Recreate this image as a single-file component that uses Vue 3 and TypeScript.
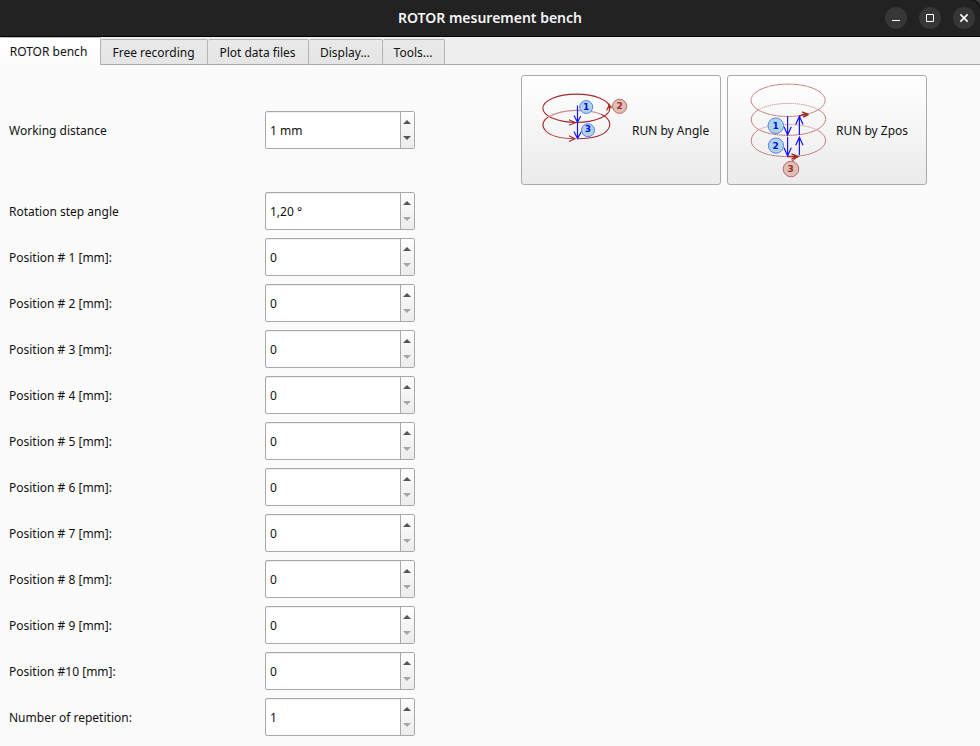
<script setup lang="ts">
import { ref } from 'vue'

interface Field {
  label: string
  value: string
  canDecrease: boolean
}

const tabs = [
  { name: 'ROTOR bench', cls: 'bench' },
  { name: 'Free recording', cls: 'free' },
  { name: 'Plot data files', cls: 'plot' },
  { name: 'Display...', cls: 'display' },
  { name: 'Tools...', cls: 'tools' },
]
const activeTab = ref(0)

const fields: Field[] = [
  { label: 'Rotation step angle', value: '1,20 °', canDecrease: false },
  ...Array.from({ length: 10 }, (_, i) => ({
    label: `Position #${i < 9 ? ' ' : ''}${i + 1} [mm]:`,
    value: '0',
    canDecrease: false,
  })),
  { label: 'Number of repetition:', value: '1', canDecrease: false },
]
const rows: Field[] = [{ label: 'Working distance', value: '1 mm', canDecrease: true }, ...fields]
</script>

<template>
  <div class="window">
    <div class="titlebar-frame">
      <header class="titlebar">
        <h1 class="title">ROTOR mesurement bench</h1>
        <div class="controls">
          <svg class="control" viewBox="0 0 22 22"><circle cx="11" cy="11" r="11" /><path d="M7 13.5h8" /></svg>
          <svg class="control" viewBox="0 0 22 22"><circle cx="11" cy="11" r="11" /><path d="M7.5 7.5h7v7h-7z" /></svg>
          <svg class="control" viewBox="0 0 22 22"><circle cx="11" cy="11" r="11" /><path class="cross" d="M7.4 7.4l7.2 7.2M14.6 7.4l-7.2 7.2" /></svg>
        </div>
      </header>
    </div>

    <nav class="tabs">
      <button
        v-for="(tab, i) in tabs"
        :key="tab.name"
        type="button"
        :class="['tab', tab.cls, { active: i === activeTab }]"
        @click="activeTab = i"
      >{{ tab.name }}</button>
    </nav>

    <main class="form">
      <div v-for="(row, i) in rows" :key="row.label" :class="['row', { first: i === 0 }]">
        <span class="label">{{ row.label }}</span>
        <div class="spin">
          <span class="value">{{ row.value }}</span>
          <span class="arrows">
            <svg class="arrow" viewBox="0 0 8 4"><path d="M0 4L4 0L8 4z" /></svg>
            <svg :class="['arrow', { disabled: !row.canDecrease }]" viewBox="0 0 8 4"><path d="M0 0L4 4L8 0z" /></svg>
          </span>
        </div>
        <div v-if="i === 0" class="actions">
          <button type="button" class="run">
            <svg class="picture" viewBox="528 80 100 100">
              <g class="red">
                <ellipse cx="576.4" cy="108.3" rx="33.5" ry="14.2" />
                <path d="M548 117.2C537 124 543 138.7 575 138.7M578 138.7C612 138.7 617 121 601 114.2" />
                <path class="faint" d="M548 117.2C558 111.5 567 110.4 576 110.4S594 111.3 601 114.2" />
                <path d="M569 119.8L575.5 122.7L569 125.2M569 135.8L575 138.7L569 141.5" />
                <path d="M606.6 110.5L609.3 104.5L611.5 108.3M609.3 104.5V110M611.5 106.5h2" />
              </g>
              <g class="blue">
                <path d="M577.5 105.5V122.5M574 115.5L577.5 122.3L580.7 116M577.5 122.5V138.5M574 131.5L577.5 138.4L581.5 131.5" />
              </g>
              <g class="blue-badge">
                <circle cx="586.2" cy="107" r="6.5" /><text x="586.2" y="109.8">1</text>
                <circle cx="588" cy="130.2" r="6.5" /><text x="588" y="132.3">3</text>
              </g>
              <g class="red-badge"><circle cx="619.6" cy="106.3" r="7.1" /><text x="619.6" y="109.4">2</text></g>
            </svg>
            <span class="caption">RUN by Angle</span>
          </button>
          <button type="button" class="run">
            <svg class="picture" viewBox="732 80 100 100">
              <g class="red thin">
                <ellipse class="pale" cx="788.1" cy="100.3" rx="37" ry="16.2" />
                <path class="pale" d="M758 110C743 119 753 135.3 788 135.3S835 118 818 109.5M758 130C743 141 753 156.6 788 156.6S835 140 818 130.5" />
                <path class="dots" d="M758 110C773 101.3 803 101.3 818 109.5M758 130C773 122.5 803 122.5 818 130.5" />
                <path class="heavy" d="M799.5 116.2L803 114.5H808.5L802 111.8M808.5 114.5L803 117M788 156.5H798M791.5 153.8L798 156.5L791.5 159" />
                <path d="M791.5 161.5L798 156.7" />
              </g>
              <g class="blue">
                <path d="M787.6 116.3V135M784 126.8L787.6 135L791.3 126.8M787.6 137V156M784 147.8L787.6 156L791.3 147.8M799.4 155V137.5M795.7 145.2L799.4 137.2L803 145.2M799.4 135V116.5M795.7 124.5L799.4 116.3L803 124.5" />
              </g>
              <g class="blue-badge">
                <circle cx="775.8" cy="125.7" r="7.8" /><text x="775.6" y="128.9">1</text>
                <circle cx="776" cy="145.6" r="7.6" /><text x="775.6" y="148.6">2</text>
              </g>
              <g class="red-badge"><circle cx="791" cy="169" r="7.8" /><text x="790.6" y="172">3</text></g>
            </svg>
            <span class="caption">RUN by Zpos</span>
          </button>
        </div>
      </div>
    </main>
  </div>
</template>

<style>
body {
  background: #fbfbfb;
  overflow: hidden;
}
</style>

<style scoped>
.window {
  height: 746px;
  box-sizing: border-box;
  overflow: hidden;
  background: #fbfbfb;
  color: #111;
  font: 12px/16px "Noto Sans", "Open Sans", sans-serif;
}
.titlebar-frame {
  background: #3a3a3a;
}
.titlebar {
  display: grid;
  grid-template-columns: 1fr auto 1fr;
  align-items: center;
  height: 36px;
  background: #222;
  border-bottom: 1px solid #000;
  border-top-right-radius: 11px;
  box-shadow: 1px -1px #111;
}
.title {
  grid-column: 2;
  margin: 0;
  color: #f5f5f5;
  font: 600 14px/18px "Noto Sans", sans-serif;
  letter-spacing: -0.01px;
}
.controls {
  display: flex;
  justify-content: flex-end;
  gap: 12px;
  padding-right: 5px;
}
.control {
  width: 22px;
  height: 22px;
  fill: #373737;
}
.control path {
  fill: none;
  stroke: #fff;
  stroke-width: 1;
}
.control .cross {
  stroke-width: 1.5;
}
.tabs {
  display: flex;
  align-items: flex-end;
  height: 28px;
  box-sizing: border-box;
  background: #eee;
  box-shadow: inset 0 -1px #aaa;
}
.tab {
  height: 26px;
  box-sizing: border-box;
  padding: 2px 1px 0 0;
  border: 1px solid #b4b4b4;
  border-left: 0;
  border-bottom-color: #aaa;
  border-radius: 2px 2px 0 0;
  background: linear-gradient(#e9e9e9, #e5e5e5);
  color: #111;
  font: inherit;
}
.tab.active {
  height: 28px;
  padding-top: 1px;
  border-top-color: #bbb;
  border-bottom: 0;
  background: linear-gradient(#fff, #fbfbfb);
}
.tab.bench { width: 101px; padding-right: 3px; }
.free { width: 107px; }
.plot { width: 101px; }
.display { width: 74px; }
.tools { width: 62px; }
.form {
  display: flex;
  flex-direction: column;
  gap: 8px;
  padding: 10px 9px 0;
}
.row {
  display: grid;
  grid-template-columns: 256px 256px auto;
  align-items: center;
  justify-content: start;
  height: 38px;
}
.first {
  height: 110px;
  margin-bottom: -1px;
}
.label {
  padding-top: 2px;
  white-space: pre;
}
.caption {
  padding-top: 2px;
}
.spin {
  display: flex;
  width: 150px;
  height: 38px;
  box-sizing: border-box;
  border: 1px solid #a8a8a8;
  border-radius: 2px;
  background: #fff;
  box-shadow: inset 0 1px #eee;
  overflow: hidden;
}
.value {
  flex: 1;
  padding-left: 4px;
  line-height: 37px;
}
.arrows {
  display: flex;
  flex-direction: column;
  align-items: flex-start;
  gap: 12px;
  width: 11px;
  padding: 8px 0 0 2px;
  border-left: 1px solid #aaa;
  background: linear-gradient(#fdfdfd, #ececec);
}
.arrow {
  width: 8px;
  height: 4px;
  fill: #555;
}
.arrow.disabled {
  fill: #a5a5a5;
}
.actions {
  display: flex;
  gap: 6px;
}
.run {
  display: flex;
  align-items: center;
  gap: 4px;
  width: 200px;
  height: 110px;
  box-sizing: border-box;
  padding: 0 0 0 6px;
  border: 1px solid #aaa;
  border-radius: 3px;
  background: linear-gradient(#fff, #ebebeb);
  color: #111;
  font: inherit;
}
.run + .run {
  padding-left: 4px;
}
.picture {
  width: 100px;
  height: 100px;
}
.red {
  fill: none;
  stroke: #a52a2a;
  stroke-width: 1.1;
}
.thin {
  stroke-width: 1;
}
.thin .pale {
  stroke: #c07070;
  stroke-dasharray: 2 0.3;
}
.thin .heavy {
  stroke-width: 1.4;
}
.faint {
  stroke: #c98a8a;
}
.dots {
  stroke: #d3a0a0;
  stroke-dasharray: 1.5 0.6;
}
.blue {
  fill: none;
  stroke: #1717ff;
  stroke-width: 1.2;
}
.blue-badge circle {
  fill: #add4e0;
  stroke: #5a80f5;
}
.red-badge circle {
  fill: #dcc0b5;
  stroke: #bf6a6a;
}
.blue-badge text,
.red-badge text {
  font: bold 9px "DejaVu Sans", sans-serif;
  text-anchor: middle;
}
.blue-badge text {
  fill: #0a0aff;
}
.red-badge text {
  fill: #a52a2a;
}
</style>
